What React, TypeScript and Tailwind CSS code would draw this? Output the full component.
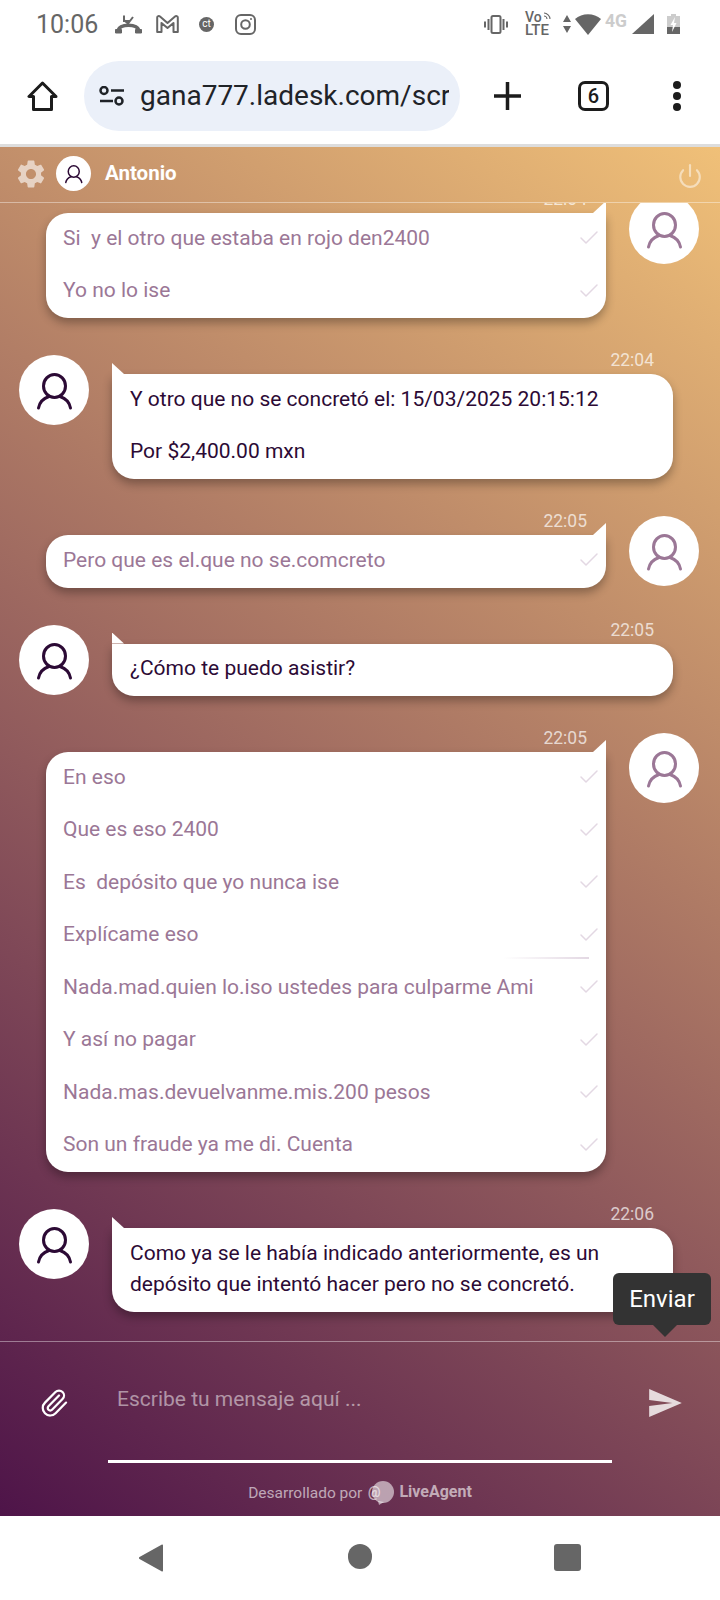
import { Paperclip, Power, Check } from "lucide-react";

const outRows1 = ["Si  y el otro que estaba en rojo den2400", "Yo no lo ise"];
const outRows2 = ["Pero que es el.que no se.comcreto"];
const outRows3 = [
	"En eso",
	"Que es eso 2400",
	"Es  depósito que yo nunca ise",
	"Explícame eso",
	"Nada.mad.quien lo.iso ustedes para culparme Ami",
	"Y así no pagar",
	"Nada.mas.devuelvanme.mis.200 pesos",
	"Son un fraude ya me di. Cuenta",
];

const UserIcon = ({ color, className }: { color: string, className: string }) => {
	return (
		<svg viewBox="0 0 70 70" className={className} fill="none" stroke={color} strokeWidth="3">
			<ellipse cx="35.500" cy="31" rx="11" ry="11.500" />
			<path d="M19.500 53c1-5.500 4.500-9.500 10.500-11.500M51.500 53c-1-5.500-4.500-9.500-10.500-11.500" strokeLinecap="round" />
		</svg>
	)
}

const Avatar = ({ color }: { color: string }) => {
	return (
		<div className="mt-[7px] h-[70px] w-[70px] shrink-0 rounded-full bg-white">
			<UserIcon color={color} className="h-[70px] w-[70px]" />
		</div>
	)
}

const Outgoing = ({ time, rows, line }: { time: string, rows: string[], line?: boolean }) => {
	return (
		<div className="flex pl-[46px]">
			<div className="w-[560px]">
				<div className="h-[26px] pr-[19px] text-right text-[17.500px] leading-[24px] text-white/70">{time}</div>
				<div className="relative rounded-[22px] rounded-tr-none bg-white shadow-[0_5px_10px_rgba(0,0,0,0.3)]">
					<div className="absolute right-0 top-[-12px] h-[12px] w-[13px] bg-white [clip-path:polygon(100%_0,100%_100%,0_100%)]" />
					{rows.map((r, i) => (
						<div key={i} className="relative flex h-[52.5px] items-center justify-between pb-[2px] pl-[17px] pr-[5px] text-[21px] text-[#9b7796]">
							<span className="whitespace-pre">{r}</span>
							<Check size={24} strokeWidth={1.5} className="text-[#e3d8e3]" />
							{line && i === 3 && (
								<div className="absolute bottom-[3px] right-[17px] h-[2px] w-[86px] bg-gradient-to-r from-white to-[#e3d8e3]" />
							)}
						</div>
					))}
				</div>
			</div>
			<div className="ml-[23px]">
				<Avatar color="#9b7796" />
			</div>
		</div>
	)
}

const Incoming = ({ time, children }: { time: string, children: React.ReactNode }) => {
	return (
		<div className="flex pl-[19px]">
			<Avatar color="#2c0a35" />
			<div className="ml-[23px] w-[561px]">
				<div className="h-[26px] pr-[19px] text-right text-[17.500px] leading-[24px] text-white/70">{time}</div>
				<div className="relative rounded-[22px] rounded-tl-none bg-white text-[21px] text-[#2c0a35] shadow-[0_5px_10px_rgba(0,0,0,0.3)]">
					<div className="absolute left-0 top-[-11px] h-[11px] w-[12px] bg-white [clip-path:polygon(0_0,100%_100%,0_100%)]" />
					{children}
				</div>
			</div>
		</div>
	)
}

const StatusBar = () => {
	return (
		<div className="flex h-[48px] shrink-0 items-center justify-between pl-[36px] pr-[40px] text-[#666]">
			<div className="flex items-center">
				<span className="w-[61px] text-[25px] leading-none">10:06</span>
				{/* missed call */}
				<svg viewBox="0 0 27 19" className="ml-[18px] h-[19px] w-[27px]" fill="none" stroke="#666">
					<path d="M3 15.500c2-7 19-7 21 0" strokeWidth="3.500" />
					<path d="M.5 14.500h6v3.500h-6zM20.500 14.500h6v3.500h-6z" fill="#666" strokeWidth="1" strokeLinejoin="round" />
					<path d="M9 .5v5.500h5.500M9.500 5.500 13 8.500l5-6.500" strokeWidth="2" />
				</svg>
				{/* gmail */}
				<svg viewBox="0 0 23 18" className="ml-[14px] h-[18px] w-[23px]" fill="none" stroke="#666" strokeWidth="2" strokeLinejoin="round">
					<path d="M1.200 17V2.500C1.200 1 3 .6 4 1.500l7.500 6.500L19 1.500c1-.9 2.800-.5 2.800 1V17h-4.300V8l-6 5-6-5v9z" />
				</svg>
				{/* ct */}
				<div className="ml-[20px] flex h-[15px] w-[15px] items-center justify-center rounded-full bg-[#666] text-[10px] leading-none text-white">ct</div>
				{/* instagram */}
				<svg viewBox="0 0 21 21" className="ml-[21px] h-[21px] w-[21px]" fill="none" stroke="#666" strokeWidth="2">
					<rect x="1" y="1" width="19" height="19" rx="5" />
					<circle cx="10.500" cy="10.500" r="4.300" />
					<circle cx="16" cy="5" r="1" fill="#666" stroke="none" />
				</svg>
			</div>
			<div className="flex items-center">
				{/* vibrate */}
				<svg viewBox="0 0 24 19" className="h-[19px] w-[24px]" fill="#666">
					<rect x="7.500" y="1" width="9" height="17" rx="1.500" fill="none" stroke="#666" strokeWidth="2" />
					<rect x="3.500" y="4" width="2" height="11" />
					<rect x="18.500" y="4" width="2" height="11" />
					<rect x="0" y="6.500" width="2" height="6" />
					<rect x="22" y="6.500" width="2" height="6" />
				</svg>
				{/* volte */}
				<div className="relative ml-[17px] flex h-[26px] w-[26px] flex-col justify-between text-[15px] font-medium leading-[13px]">
					<span className="text-[14px]">Vo</span>
					<span>LTE</span>
					<svg viewBox="0 0 8 8" className="absolute right-0 top-[1px] h-[8px] w-[8px]" fill="none" stroke="#666" strokeWidth="1.100">
						<path d="M1 1c3 0 6 3 6 6M1 4c1.500 0 3 1.500 3 3" />
					</svg>
				</div>
				{/* arrows */}
				<svg viewBox="0 0 8 18" className="ml-[12px] h-[18px] w-[8px]" fill="#666">
					<path d="M4 0l4 7H0zM4 18l4-7H0z" />
				</svg>
				{/* wifi */}
				<svg viewBox="0 0 26 21" className="ml-[4px] h-[21px] w-[26px]" fill="#666">
					<path d="M13 21 0 5c7-6.500 19-6.500 26 0z" />
				</svg>
				<span className="mb-[5px] ml-[4px] w-[23px] text-[17.500px] font-bold leading-none text-[#ccc]">4G</span>
				{/* signal */}
				<svg viewBox="0 0 22 20" className="ml-[4px] h-[20px] w-[22px]" fill="#666">
					<path d="M22 0v20H0z" />
				</svg>
				{/* battery */}
				<svg viewBox="0 0 13 20" className="ml-[13px] h-[20px] w-[13px]">
					<path d="M4 0h5v2h4v18H0V2h4z" fill="#ccc" />
					<path d="M0 13h13v7H0z" fill="#666" />
					<path d="M8 3 3.500 11h2.500l-1 7 4.500-9H7z" fill="#fff" />
				</svg>
			</div>
		</div>
	)
}

const BrowserBar = () => {
	return (
		<div className="h-[96px] shrink-0 pt-[13px]">
			<div className="flex items-center pl-[27px]">
				<svg viewBox="0 0 31 30" className="h-[30px] w-[31px]" fill="none" stroke="#1c1c1c" strokeWidth="3" strokeLinejoin="round">
					<path d="M15.500 2 2 15.500h4.500v13h18v-13H29z" />
				</svg>
				<div className="ml-[26px] flex h-[70px] w-[376px] items-center rounded-full bg-[#ebf0f9] pl-[15px]">
					<svg viewBox="0 0 26 20" className="h-[20px] w-[26px]" fill="none" stroke="#1f2328" strokeWidth="2.500">
						<circle cx="5" cy="4.500" r="3.500" />
						<circle cx="20" cy="15" r="3.500" />
						<path d="M12 4.500h13M1 15h13" />
					</svg>
					<div className="ml-[15px] w-[309px] overflow-hidden whitespace-nowrap text-[28px] leading-[34px] text-[#1f2328]">gana777.ladesk.com/script</div>
				</div>
				<svg viewBox="0 0 27 28" className="ml-[34px] h-[28px] w-[27px]" fill="none" stroke="#1c1c1c" strokeWidth="3.500">
					<path d="M13.500 0v28M0 14h27" />
				</svg>
				<div className="ml-[57px] flex h-[30px] w-[31px] items-center justify-center rounded-[7px] border-[3px] border-[#1c1c1c] text-[20px] font-medium text-[#1c1c1c]">6</div>
				<div className="ml-[64px] flex flex-col gap-[3px]">
					<div className="h-[8px] w-[8px] rounded-full bg-[#1c1c1c]" />
					<div className="h-[8px] w-[8px] rounded-full bg-[#1c1c1c]" />
					<div className="h-[8px] w-[8px] rounded-full bg-[#1c1c1c]" />
				</div>
			</div>
		</div>
	)
}

const ChatHeader = () => {
	return (
		<div className="flex h-[56px] shrink-0 items-center border-b border-white/40 pb-[2px] pl-[17px] pr-[17px]">
			<svg viewBox="2 2 20 20" className="h-[28px] w-[28px]" fill="#fff" fillOpacity="0.6">
				<path d="M19.140 12.940c.04-.3.06-.61.06-.94 0-.32-.02-.64-.07-.94l2.030-1.580c.18-.14.23-.41.12-.61l-1.920-3.320c-.12-.22-.37-.29-.59-.22l-2.390.96c-.5-.38-1.030-.7-1.620-.94l-.36-2.540c-.04-.24-.24-.41-.48-.41h-3.840c-.24 0-.43.17-.47.41l-.36 2.540c-.59.24-1.130.57-1.620.94l-2.390-.96c-.22-.08-.47 0-.59.22L2.740 8.870c-.12.21-.08.47.12.61l2.030 1.580c-.05.3-.09.63-.09.94s.02.64.07.94l-2.030 1.580c-.18.14-.23.41-.12.61l1.920 3.320c.12.22.37.29.59.22l2.390-.96c.5.38 1.030.7 1.620.94l.36 2.54c.05.24.24.41.48.41h3.840c.24 0 .44-.17.47-.41l.36-2.540c.59-.24 1.130-.56 1.620-.94l2.390.96c.22.08.47 0 .59-.22l1.920-3.320c.12-.22.07-.47-.12-.61l-2.010-1.580zM12 15.600c-1.980 0-3.600-1.620-3.600-3.600s1.620-3.600 3.600-3.600 3.600 1.620 3.600 3.600-1.620 3.600-3.600 3.600z" />
			</svg>
			<div className="ml-[11px] h-[35px] w-[35px] rounded-full bg-white">
				<UserIcon color="#2c0a35" className="h-[35px] w-[35px]" />
			</div>
			<span className="ml-[14px] text-[20.500px] font-bold text-white">Antonio</span>
			<Power size={26} strokeWidth={2} className="ml-auto mt-[5px] text-white/50" />
		</div>
	)
}

const ChatInput = () => {
	return (
		<div className="relative h-[175px] shrink-0 border-t border-white/40">
			<div className="absolute bottom-[191px] right-[9px] flex h-[52px] w-[98px] items-center justify-center rounded-[6px] bg-[#333] text-[24px] text-white">
				Enviar
				<div className="absolute bottom-[-12px] left-[40px] h-[12px] w-[24px] bg-[#333] [clip-path:polygon(0_0,100%_0,50%_100%)]" />
			</div>
			<div className="flex">
				<Paperclip size={30} strokeWidth={1.800} className="ml-[39px] mt-[46px] text-white" />
				<div className="ml-[39px] h-[121px] w-[504px] border-b-[3px] border-white pl-[9px] pt-[45px] text-[21px] leading-[24px] text-white/50">
					Escribe tu mensaje aquí ...
				</div>
				<svg viewBox="2 3 21 18" className="ml-[37px] mt-[47px] h-[28px] w-[33px]" fill="#fff" fillOpacity="0.8">
					<path d="M2.010 21 23 12 2.010 3 2 10l15 2-15 2z" />
				</svg>
			</div>
			<div className="mt-[18px] flex items-center justify-center text-[15.500px] leading-[20px] text-white/60">
				<span>Desarrollado por</span>
				<svg viewBox="0 0 26 24" className="ml-[6px] h-[24px] w-[26px]">
					<circle cx="15" cy="11" r="11" fill="#fff" fillOpacity="0.55" />
					<path d="M10 20l1 4 5-3z" fill="#fff" fillOpacity="0.55" />
					<text x="0" y="16" fontSize="14" fontWeight="700" fill="#fff" fillOpacity="0.6">@</text>
				</svg>
				<span className="mb-[2px] ml-[5px] text-[16px] font-bold">LiveAgent</span>
			</div>
		</div>
	)
}

const App = () => {
	return (
		<div className="flex h-[1600px] w-[720px] flex-col overflow-hidden bg-white font-['Roboto',sans-serif]">
			<StatusBar />
			<BrowserBar />
			<div className="h-[3px] shrink-0 bg-[#ddd]" />
			<div className="flex min-h-0 flex-1 flex-col bg-[linear-gradient(37deg,#4e1449,#f0c078)]">
				<ChatHeader />
				<div className="flex min-h-0 flex-1 flex-col justify-end gap-[30px] overflow-hidden pb-[29px]">
					<Outgoing time="22:04" rows={outRows1} />
					<Incoming time="22:04">
						<div className="flex h-[52.5px] items-center pb-[2px] pl-[18px]">Y otro que no se concretó el: 15/03/2025 20:15:12</div>
						<div className="flex h-[52.5px] items-center pb-[2px] pl-[18px]">Por $2,400.00 mxn</div>
					</Incoming>
					<Outgoing time="22:05" rows={outRows2} />
					<Incoming time="22:05">
						<div className="flex h-[52.5px] items-center pb-[2px] pl-[18px]">¿Cómo te puedo asistir?</div>
					</Incoming>
					<Outgoing time="22:05" rows={outRows3} line />
					<Incoming time="22:06">
						<div className="pb-[12px] pl-[18px] pr-[50px] pt-[10px] leading-[31px]">
							Como ya se le había indicado anteriormente, es un depósito que intentó hacer pero no se concretó.
						</div>
					</Incoming>
				</div>
				<ChatInput />
			</div>
			<div className="flex h-[84px] shrink-0 items-start pt-[28px]">
				<svg viewBox="0 0 24 28" className="ml-[139px] h-[28px] w-[24px]" fill="#666">
					<path d="M23 .5c.6 0 1 .4 1 1v25c0 .8-.7 1.300-1.500.8L.5 15c-.7-.4-.7-1.500 0-2L22.500.7z" />
				</svg>
				<div className="ml-[185px] h-[25px] w-[24px] rounded-full bg-[#666]" />
				<div className="ml-[182px] h-[27px] w-[27px] rounded-[3px] bg-[#666]" />
			</div>
		</div>
	)
}

export default App;
